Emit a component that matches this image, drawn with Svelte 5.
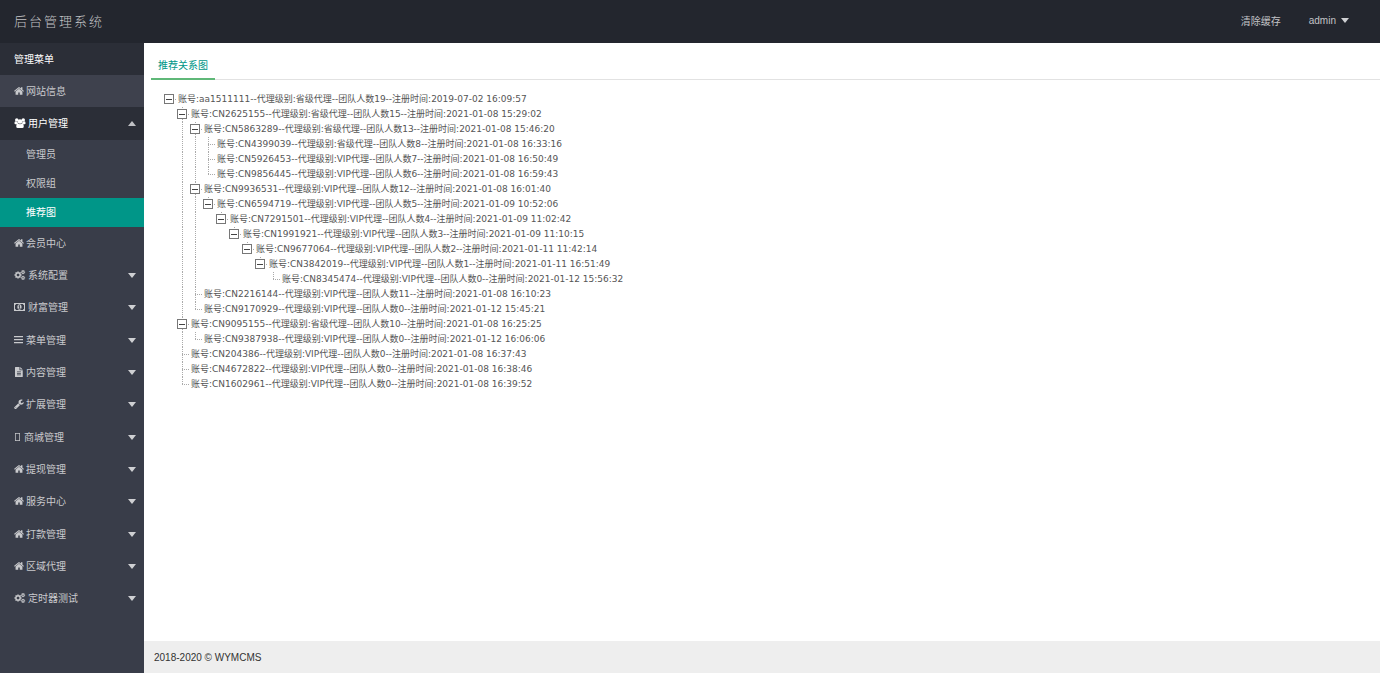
<script>
  const menu = [
    { icon: 'home', label: '网站信息', hover: true },
    {
      icon: 'users',
      label: '用户管理',
      open: true,
      children: [
        { label: '管理员' },
        { label: '权限组' },
        { label: '推荐图', active: true },
      ],
    },
    { icon: 'home', label: '会员中心' },
    { icon: 'cogs', label: '系统配置', more: true },
    { icon: 'money', label: '财富管理', more: true },
    { icon: 'bars', label: '菜单管理', more: true },
    { icon: 'file', label: '内容管理', more: true },
    { icon: 'wrench', label: '扩展管理', more: true },
    { icon: 'blank', label: '商城管理', more: true },
    { icon: 'home', label: '提现管理', more: true },
    { icon: 'home', label: '服务中心', more: true },
    { icon: 'home', label: '打款管理', more: true },
    { icon: 'home', label: '区域代理', more: true },
    { icon: 'cogs', label: '定时器测试', more: true },
  ];

  const node = (id, level, team, time, children = []) => ({ id, level, team, time, children });
  const S = '省级代理';
  const V = 'VIP代理';

  const tree = node('aa1511111', S, 19, '2019-07-02 16:09:57', [
    node('CN2625155', S, 15, '2021-01-08 15:29:02', [
      node('CN5863289', S, 13, '2021-01-08 15:46:20', [
        node('CN4399039', S, 8, '2021-01-08 16:33:16'),
        node('CN5926453', V, 7, '2021-01-08 16:50:49'),
        node('CN9856445', V, 6, '2021-01-08 16:59:43'),
      ]),
      node('CN9936531', V, 12, '2021-01-08 16:01:40', [
        node('CN6594719', V, 5, '2021-01-09 10:52:06', [
          node('CN7291501', V, 4, '2021-01-09 11:02:42', [
            node('CN1991921', V, 3, '2021-01-09 11:10:15', [
              node('CN9677064', V, 2, '2021-01-11 11:42:14', [
                node('CN3842019', V, 1, '2021-01-11 16:51:49', [
                  node('CN8345474', V, 0, '2021-01-12 15:56:32'),
                ]),
              ]),
            ]),
          ]),
        ]),
      ]),
      node('CN2216144', V, 11, '2021-01-08 16:10:23'),
      node('CN9170929', V, 0, '2021-01-12 15:45:21'),
    ]),
    node('CN9095155', S, 10, '2021-01-08 16:25:25', [
      node('CN9387938', V, 0, '2021-01-12 16:06:06'),
    ]),
    node('CN204386', V, 0, '2021-01-08 16:37:43'),
    node('CN4672822', V, 0, '2021-01-08 16:38:46'),
    node('CN1602961', V, 0, '2021-01-08 16:39:52'),
  ]);

  let closed = $state({});
  const text = (n) => `账号:${n.id}--代理级别:${n.level}--团队人数${n.team}--注册时间:${n.time}`;
</script>

{#snippet icon(name)}
  {#if name === 'home'}
    <svg class="icon" viewBox="60 200 1672 1400" aria-hidden="true"><path d="M1472 992v480q0 26-19 45t-45 19h-384v-384h-256v384h-384q-26 0-45-19t-19-45v-480q0-1 .5-3t.5-3l575-474 575 474q1 2 1 6zm223-69l-62 74q-8 9-21 11h-3q-13 0-21-7l-692-577-692 577q-12 8-24 7-13-2-21-11l-62-74q-8-10-7-23.5t11-21.5l719-599q32-26 76-26t76 26l244 204v-195q0-14 9-23t23-9h192q14 0 23 9t9 23v408l219 182q10 8 11 21.5t-7 23.5z" /></svg>
  {:else if name === 'cogs'}
    <svg class="icon wide" viewBox="0 0 1856 1792" aria-hidden="true">
      <path fill-rule="evenodd" d="M832 896q0-106-75-181t-181-75-181 75-75 181 75 181 181 75 181-75 75-181zm384-91v185q0 10-7 19.5t-16 10.5l-155 24q-11 35-32 76 34 48 90 115 7 11 7 20 0 12-7 19-23 30-82.5 89.5t-78.5 59.5q-11 0-21-7l-115-90q-37 19-77 31-11 108-23 155-7 24-30 24h-186q-11 0-20-7.5t-10-17.5l-23-153q-34-10-75-31l-118 89q-7 7-20 7-11 0-21-8-144-133-144-160 0-9 7-19 10-14 41-53t47-61q-23-44-35-82l-152-24q-10-1-17-9.5t-7-19.5v-185q0-10 7-19.5t16-10.5l155-24q11-35 32-76-34-48-90-115-7-11-7-20 0-12 7-20 22-30 82-89t79-59q11 0 21 7l115 90q34-18 77-32 11-108 23-154 7-24 30-24h186q11 0 20 7.5t10 17.5l23 153q34 10 75 31l118-89q8-7 20-7 11 0 21 8 144 133 144 160 0 8-7 19-12 16-42 54t-45 60q23 48 34 82l152 23q10 2 17 10.5t7 19.5z" />
      {#each [0, -1024] as dy}
        <path transform="translate(0 {dy})" fill-rule="evenodd" d="M1600 1408q0-52-38-90t-90-38-90 38-38 90q0 53 37.5 90.5t90.5 37.5 90.5-37.5 37.5-90.5zM1856 1338v140q0 16-149 31-12 27-30 52 51 113 51 138 0 4-4 7-122 71-124 71-8 0-46-47t-52-68q-20 2-30 2t-30-2q-14 21-52 68t-46 47q-2 0-124-71-4-3-4-7 0-25 51-138-18-25-30-52-149-15-149-31v-140q0-16 149-31 13-29 30-52-51-113-51-138 0-4 4-7 4-2 35-20t59-34 30-16q8 0 46 46.5t52 67.5q20-2 30-2t30 2q51-71 92-112l6-2q4 0 124 70 4 3 4 7 0 25-51 138 17 23 30 52 149 15 149 31z" />
      {/each}
    </svg>
  {:else if name === 'users'}
    <svg class="icon wide" viewBox="0 0 22 20" aria-hidden="true">
      <circle cx="4.5" cy="4" r="3.5" /><circle cx="17.5" cy="4" r="3.500" /><circle cx="11" cy="7" r="4.700" />
      <path d="M0 11V9.500Q0 6.500 2 6.500Q4.500 8.500 6.200 8Q6.500 10 7.500 11.200Q5.500 11.300 4.500 12.500H2Q0 12.500 0 11ZM22 11V9.500Q22 6.500 20 6.500Q17.500 8.500 15.800 8Q15.500 10 14.500 11.200Q16.500 11.300 17.500 12.500H20Q22 12.500 22 11ZM3.500 17Q3.500 11 7 11Q11 14 15 11Q18.500 11 18.500 17Q18.500 20 15.500 20H6.500Q3.500 20 3.500 17Z" />
    </svg>
  {:else if name === 'money'}
    <svg class="icon wide" viewBox="0 0 12 10" aria-hidden="true">
      <path fill-rule="evenodd" d="M0 1H11V9H0ZM2 2Q2 3 1 3V7Q2 7 2 8H9Q9 7 10 7V3Q9 3 9 2Z" />
      <path fill-rule="evenodd" d="M5.500 2.200C8.300 2.200 8.300 7.800 5.500 7.800S2.700 2.200 5.500 2.200ZM5.200 3.300L4.400 4L4.800 4.500L5.200 4.200V6H4.600V6.700H6.600V6H6V3.300Z" />
    </svg>
  {:else if name === 'bars'}
    <svg class="icon" viewBox="0 0 10 10" aria-hidden="true"><path d="M0 1H9V2.300H0ZM0 4H9V5.300H0ZM0 7H9V8.300H0Z" /></svg>
  {:else if name === 'file'}
    <svg class="icon" viewBox="0 0 18 20" aria-hidden="true"><path fill-rule="evenodd" d="M2 0H10V6.500H16.500V19Q16.500 20 15.500 20H2Q1 20 1 19V1Q1 0 2 0ZM11.500 0L16.500 5H11.500ZM5 9V10.400H12.800V9ZM5 12V13.400H12.800V12ZM5 15V16.400H12.800V15Z" /></svg>
  {:else if name === 'wrench'}
    <svg class="icon" viewBox="64 64 1700 1660" aria-hidden="true"><path d="M448 1472q0-26-19-45t-45-19-45 19-19 45 19 45 45 19 45-19 19-45zm644-420l-682 682q-37 37-90 37-52 0-91-37l-106-108q-38-36-38-90 0-53 38-91l681-681q39 98 114.500 173.500t173.500 114.500zm634-435q0 39-23 106-47 134-164.500 217.500t-258.500 83.500q-185 0-316.500-131.500t-131.500-316.500 131.500-316.500 316.500-131.500q58 0 121.500 16.500t107.500 46.500q16 11 16 28t-16 28l-293 169v224l193 107q5-3 79-48.500t135.500-81 70.500-35.500q15 0 23.500 10t8.500 25z" /></svg>
  {:else}
    <svg class="icon narrow" viewBox="0 0 8 10" aria-hidden="true"><path fill-rule="evenodd" d="M1 1H6V9H1ZM1.700 1.700V8.300H5.300V1.700Z" /></svg>
  {/if}
{/snippet}

{#snippet branch(n, lines, last, root)}
  <li>
    <div class="row">
      {#each lines as on}
        <svg class="cell" viewBox="0 0 13 15" aria-hidden="true">
          {#if on}<path class="dots" d="M5.500 0V15" />{/if}
        </svg>
      {/each}
      {#if n.children.length}
        <button
          class="cell"
          aria-label="展开或收起 {n.id}"
          aria-expanded={!closed[n.id]}
          onclick={() => (closed[n.id] = !closed[n.id])}
        >
          <svg class="cell" viewBox="0 0 13 15" aria-hidden="true">
            {#if !root}<path class="dots" d="M5.500 0V{last ? 3 : 15}" />{/if}
            <path class="dots" d="M11 7.500H13" />
            <rect class="box" x="0.500" y="2.500" width="9" height="9" />
            <path class="sign" d={closed[n.id] ? 'M2 7.500H9M5.500 4V11' : 'M2 7.500H8'} />
          </svg>
        </button>
      {:else}
        <svg class="cell" viewBox="0 0 13 15" aria-hidden="true">
          <path class="dots" d="M5.500 0V{last ? 8 : 15}M5 7.500H13" />
        </svg>
      {/if}
      <span class="name">{text(n)}</span>
    </div>
    {#if n.children.length && !closed[n.id]}
      <ul>
        {#each n.children as child, i}
          {@render branch(child, root ? [false] : [...lines, !last], i === n.children.length - 1, false)}
        {/each}
      </ul>
    {/if}
  </li>
{/snippet}

<div class="page">
  <header>
    <div class="logo">后台管理系统</div>
    <nav class="top">
      <a href="#cache">清除缓存</a>
      <a href="#admin">admin<i class="caret"></i></a>
    </nav>
  </header>
  <div class="body">
    <aside>
      <ul class="menu">
        <li><a class="title" href="#menu">管理菜单</a></li>
        {#each menu as item}
          <li>
            <a href="#{item.label}" class:hover={item.hover} class:open={item.open}>
              {@render icon(item.icon)}<span>{item.label}</span>
              {#if item.more || item.open}<i class="caret" class:up={item.open}></i>{/if}
            </a>
            {#if item.children}
              <ul class="sub">
                {#each item.children as child}
                  <li><a href="#{child.label}" class:active={child.active}>{child.label}</a></li>
                {/each}
              </ul>
            {/if}
          </li>
        {/each}
      </ul>
    </aside>
    <div class="content">
      <main>
        <div class="tabs"><a href="#tree">推荐关系图</a></div>
        <ul class="tree">
          {@render branch(tree, [], true, true)}
        </ul>
      </main>
      <footer>2018-2020 © WYMCMS</footer>
    </div>
  </div>
</div>

<style>
  :global(body) {
    margin: 0;
  }
  .page {
    display: flex;
    flex-direction: column;
    min-height: 100vh;
    font: 10px 'Liberation Sans', 'Noto Sans CJK SC', sans-serif;
    color: #333;
    background: #fff;
  }
  ul {
    list-style: none;
    margin: 0;
    padding: 0;
  }
  a {
    color: inherit;
    text-decoration: none;
  }
  header {
    display: flex;
    justify-content: space-between;
    align-items: center;
    box-sizing: border-box;
    height: 43px;
    padding: 0 31px 2px 14px;
    background: #23262e;
    color: #c2c3c6;
  }
  .logo {
    font-size: 13px;
    font-weight: 300;
    letter-spacing: 2px;
  }
  .top {
    display: flex;
    gap: 28px;
  }
  .top a {
    display: flex;
    align-items: center;
  }
  .top .caret {
    margin-left: 5px;
  }
  .caret {
    border: 4px solid transparent;
    border-top: 5px solid #cfd0d3;
    border-bottom: 0;
  }
  .caret.up {
    border-top: 0;
    border-bottom: 5px solid #c0c1c5;
  }
  .body {
    display: flex;
    flex: 1;
  }
  aside {
    flex: none;
    width: 144px;
    background: #393d49;
    color: #c9cacd;
  }
  .menu > li > a {
    display: flex;
    align-items: center;
    box-sizing: border-box;
    height: 32px;
    padding: 0 8px 2px 14px;
  }
  .menu > li:nth-child(3n) > a {
    height: 33px;
  }
  .menu .caret {
    margin: 2px 0 0 auto;
  }
  .menu .title,
  .menu .open {
    background: #2b2e37;
    color: #fff;
  }
  .menu .hover {
    background: #3e414d;
  }
  .icon {
    flex: none;
    width: 10px;
    height: 10px;
    margin: 1px 2px 0 0;
    fill: currentColor;
  }
  .wide {
    width: 12px;
  }
  .narrow {
    width: 8px;
  }
  .sub a {
    display: flex;
    align-items: center;
    box-sizing: border-box;
    height: 29px;
    padding: 0 0 2px 26px;
  }
  .sub .active {
    background: #009688;
    color: #fff;
  }
  .content {
    display: flex;
    flex-direction: column;
    flex: 1;
    min-width: 0;
  }
  main {
    flex: 1;
    padding: 7px 0 0 7px;
  }
  .tabs {
    display: flex;
    border-bottom: 1px solid #e2e2e2;
  }
  .tabs a {
    padding: 4px 7px 0;
    margin-bottom: -1px;
    line-height: 24px;
    border-bottom: 2px solid #5fb878;
    color: #009688;
  }
  .tree {
    padding: 12px 0 0 13px;
    font: 9px 'DejaVu Sans', 'Noto Sans CJK SC', sans-serif;
    color: #555;
  }
  .row {
    display: flex;
    height: 15px;
    line-height: 15px;
    white-space: nowrap;
  }
  .cell {
    display: block;
    flex: none;
    width: 13px;
    height: 15px;
    padding: 0;
    border: 0;
    background: none;
    shape-rendering: crispEdges;
    fill: none;
  }
  button.cell {
    cursor: pointer;
  }
  .dots {
    stroke: #aaa;
    stroke-dasharray: 1 1;
  }
  .box {
    fill: #fff;
    stroke: #777;
  }
  .sign {
    stroke: #444;
  }
  .name {
    padding-left: 1px;
  }
  footer {
    box-sizing: border-box;
    height: 32px;
    line-height: 30px;
    padding: 2px 0 0 10px;
    background: #eee;
  }
</style>
